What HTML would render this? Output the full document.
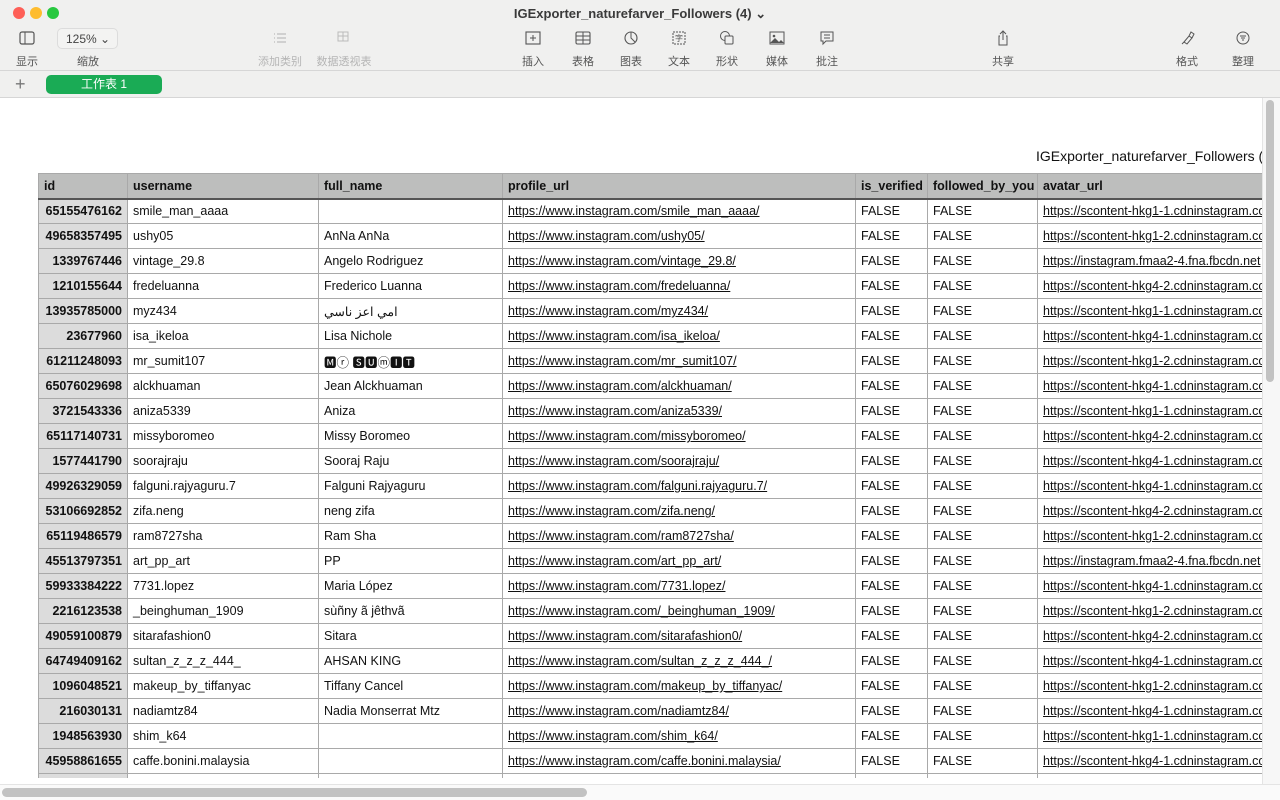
<!DOCTYPE html>
<html><head><meta charset="utf-8">
<style>
*{margin:0;padding:0;box-sizing:border-box}
body{width:1280px;height:800px;overflow:hidden;background:#fff;font-family:"Liberation Sans","Noto Sans CJK SC",sans-serif;position:relative}
#top{position:absolute;left:0;top:0;width:1280px;height:71px;background:#f0f0ef;border-bottom:1px solid #d6d6d6}
#tabs{position:absolute;left:0;top:71px;width:1280px;height:27px;background:#f0f0ef;border-bottom:1px solid #d6d6d6}
.dot{position:absolute;top:7px;width:12px;height:12px;border-radius:50%}
.title{position:absolute;top:6px;left:0;width:1280px;text-align:center;font-size:13px;font-weight:bold;color:#3a3a3a}
.tb{position:absolute;top:53px;font-size:11px;color:#555;width:60px;text-align:center;margin-left:-30px}
.tb.dis{color:#b5b5b5}
.ic{position:absolute;top:30px;margin-left:-9px;width:18px;height:16px}
.zoom{position:absolute;left:57px;top:28px;width:61px;height:21px;border:1px solid #dcdcdc;border-radius:5px;background:#f3f3f2;font-size:12px;color:#444;padding:3px 0 0 8px}
.tab{position:absolute;left:46px;top:75px;width:116px;height:19px;background:#1aab55;border-radius:5px;color:#fff;font-size:12px;text-align:center;line-height:19px}
.plus{position:absolute;left:15px;top:74px;font-size:18px;color:#777;font-weight:300}
#capw{position:absolute;left:1000px;top:146px;width:262px;height:20px;overflow:hidden}
#cap{position:absolute;left:36px;top:2px;font-size:14px;color:#111;white-space:nowrap}
#wrap{position:absolute;left:38px;top:173px;width:1224px;height:605px;overflow:hidden}
table{border-collapse:collapse;table-layout:fixed;width:1300px;font-size:12.5px;color:#111}
td{border:1px solid #a9a9a9;height:25px;padding:0 5px;white-space:nowrap;overflow:hidden}
tr.h td{background:#bdbebd;font-weight:bold;height:25px;border-bottom:2px solid #555}
td.id{background:#dcdcdc;font-weight:bold;text-align:right}
tr.h td.id{background:#bdbebd;text-align:left}
td.u{text-decoration:underline}
#vs{position:absolute;left:1266px;top:100px;width:8px;height:282px;background:#c2c2c2;border-radius:4px}
#vsb{position:absolute;left:1262px;top:98px;width:18px;height:700px;background:#f7f7f7;border-left:1px solid #e4e4e4}
#hs{position:absolute;left:2px;top:788px;width:585px;height:9px;background:#c2c2c2;border-radius:5px}
#hsb{position:absolute;left:0;top:784px;width:1280px;height:16px;background:#fafafa;border-top:1px solid #e4e4e4}
</style></head><body>
<div id="top">
<div class="dot" style="left:13px;background:#fe5f57"></div>
<div class="dot" style="left:30px;background:#febc2e"></div>
<div class="dot" style="left:47px;background:#28c840"></div>
<div class="title">IGExporter_naturefarver_Followers (4) ⌄</div>
<svg class="ic" style="left:27px" viewBox="0 0 18 16"><rect x="2" y="2" width="14" height="12" rx="2" fill="none" stroke="#555" stroke-width="1.2"/><line x1="7" y1="2" x2="7" y2="14" stroke="#555"/></svg>
<div class="tb" style="left:27px">显示</div>
<div class="zoom">125% ⌄</div>
<div class="tb" style="left:88px">缩放</div>
<svg class="ic" style="left:280px" viewBox="0 0 18 16"><g stroke="#bbb" stroke-width="1.2"><line x1="3" y1="4" x2="4" y2="4"/><line x1="6" y1="4" x2="15" y2="4"/><line x1="3" y1="8" x2="4" y2="8"/><line x1="6" y1="8" x2="15" y2="8"/><line x1="3" y1="12" x2="4" y2="12"/><line x1="6" y1="12" x2="15" y2="12"/></g></svg>
<div class="tb dis" style="left:280px">添加类别</div>
<svg class="ic" style="left:344px" viewBox="0 0 18 16"><rect x="3" y="2" width="10" height="9" fill="none" stroke="#bbb"/><line x1="8" y1="2" x2="8" y2="11" stroke="#bbb"/><line x1="3" y1="6" x2="13" y2="6" stroke="#bbb"/></svg>
<div class="tb dis" style="left:344px">数据透视表</div>
<svg class="ic" style="left:533px" viewBox="0 0 18 16"><rect x="2" y="2" width="14" height="12" fill="none" stroke="#555" stroke-width="1.1"/><path d="M9 5v6M6 8h6" stroke="#555"/></svg>
<div class="tb" style="left:533px">插入</div>
<svg class="ic" style="left:583px" viewBox="0 0 18 16"><rect x="2" y="2" width="14" height="12" rx="1.5" fill="none" stroke="#555" stroke-width="1.1"/><path d="M2 6h14M2 10h14M9 2v12" stroke="#555"/></svg>
<div class="tb" style="left:583px">表格</div>
<svg class="ic" style="left:631px" viewBox="0 0 18 16"><circle cx="9" cy="8" r="6" fill="none" stroke="#555" stroke-width="1.1"/><path d="M9 2v6l4 4" fill="none" stroke="#555"/></svg>
<div class="tb" style="left:631px">图表</div>
<svg class="ic" style="left:679px" viewBox="0 0 18 16"><rect x="3" y="2" width="12" height="12" fill="none" stroke="#555" stroke-dasharray="2 1"/><text x="9" y="11" font-size="8" text-anchor="middle" fill="#555">字</text></svg>
<div class="tb" style="left:679px">文本</div>
<svg class="ic" style="left:727px" viewBox="0 0 18 16"><circle cx="7" cy="6" r="4.5" fill="none" stroke="#555"/><rect x="7" y="6" width="8" height="8" rx="1" fill="#f0f0ef" stroke="#555"/></svg>
<div class="tb" style="left:727px">形状</div>
<svg class="ic" style="left:777px" viewBox="0 0 18 16"><rect x="2" y="2" width="14" height="12" fill="none" stroke="#555"/><path d="M2 13l5-5 4 4 2-2 3 3z" fill="#555"/><circle cx="6" cy="6" r="1.3" fill="#555"/></svg>
<div class="tb" style="left:777px">媒体</div>
<svg class="ic" style="left:827px" viewBox="0 0 18 16"><path d="M3 2h12v9H8l-3 3v-3H3z" fill="none" stroke="#555"/><path d="M6 5h6M6 8h6" stroke="#555"/></svg>
<div class="tb" style="left:827px">批注</div>
<svg class="ic" style="left:1003px" viewBox="0 0 18 16"><path d="M6 6H5v9h8V6h-1M9 1v9M6 4l3-3 3 3" fill="none" stroke="#555"/></svg>
<div class="tb" style="left:1003px">共享</div>
<svg class="ic" style="left:1187px" viewBox="0 0 18 16"><path d="M4 14l3-3M6 12l5-6 3 2-5 6zM11 6l2-4 3 2-2 4" fill="none" stroke="#555"/></svg>
<div class="tb" style="left:1187px">格式</div>
<svg class="ic" style="left:1243px" viewBox="0 0 18 16"><circle cx="9" cy="8" r="6" fill="none" stroke="#555"/><path d="M6 6h6M7 8h4M8 10h2" stroke="#555"/></svg>
<div class="tb" style="left:1243px">整理</div>
</div>
<div id="tabs"></div>
<div class="plus">+</div>
<div class="tab">工作表 1</div>
<div id="capw"><div id="cap">IGExporter_naturefarver_Followers (4)</div></div>
<div id="wrap"><table>
<colgroup><col style="width:89px"><col style="width:191px"><col style="width:184px"><col style="width:353px"><col style="width:72px"><col style="width:110px"><col style="width:301px"></colgroup>
<tr class="h"><td class="id">id</td><td>username</td><td>full_name</td><td>profile_url</td><td>is_verified</td><td>followed_by_you</td><td>avatar_url</td></tr>
<tr><td class="id">65155476162</td><td>smile_man_aaaa</td><td></td><td class="u">https://www.instagram.com/smile_man_aaaa/</td><td>FALSE</td><td>FALSE</td><td class="u">https://scontent-hkg1-1.cdninstagram.com</td></tr>
<tr><td class="id">49658357495</td><td>ushy05</td><td>AnNa AnNa</td><td class="u">https://www.instagram.com/ushy05/</td><td>FALSE</td><td>FALSE</td><td class="u">https://scontent-hkg1-2.cdninstagram.com</td></tr>
<tr><td class="id">1339767446</td><td>vintage_29.8</td><td>Angelo Rodriguez</td><td class="u">https://www.instagram.com/vintage_29.8/</td><td>FALSE</td><td>FALSE</td><td class="u">https://instagram.fmaa2-4.fna.fbcdn.net</td></tr>
<tr><td class="id">1210155644</td><td>fredeluanna</td><td>Frederico Luanna</td><td class="u">https://www.instagram.com/fredeluanna/</td><td>FALSE</td><td>FALSE</td><td class="u">https://scontent-hkg4-2.cdninstagram.com</td></tr>
<tr><td class="id">13935785000</td><td>myz434</td><td>امي اعز ناسي</td><td class="u">https://www.instagram.com/myz434/</td><td>FALSE</td><td>FALSE</td><td class="u">https://scontent-hkg1-1.cdninstagram.com</td></tr>
<tr><td class="id">23677960</td><td>isa_ikeloa</td><td>Lisa Nichole</td><td class="u">https://www.instagram.com/isa_ikeloa/</td><td>FALSE</td><td>FALSE</td><td class="u">https://scontent-hkg4-1.cdninstagram.com</td></tr>
<tr><td class="id">61211248093</td><td>mr_sumit107</td><td>🅼ⓡ 🆂🆄ⓜ🅸🆃</td><td class="u">https://www.instagram.com/mr_sumit107/</td><td>FALSE</td><td>FALSE</td><td class="u">https://scontent-hkg1-2.cdninstagram.com</td></tr>
<tr><td class="id">65076029698</td><td>alckhuaman</td><td>Jean Alckhuaman</td><td class="u">https://www.instagram.com/alckhuaman/</td><td>FALSE</td><td>FALSE</td><td class="u">https://scontent-hkg4-1.cdninstagram.com</td></tr>
<tr><td class="id">3721543336</td><td>aniza5339</td><td>Aniza</td><td class="u">https://www.instagram.com/aniza5339/</td><td>FALSE</td><td>FALSE</td><td class="u">https://scontent-hkg1-1.cdninstagram.com</td></tr>
<tr><td class="id">65117140731</td><td>missyboromeo</td><td>Missy Boromeo</td><td class="u">https://www.instagram.com/missyboromeo/</td><td>FALSE</td><td>FALSE</td><td class="u">https://scontent-hkg4-2.cdninstagram.com</td></tr>
<tr><td class="id">1577441790</td><td>soorajraju</td><td>Sooraj Raju</td><td class="u">https://www.instagram.com/soorajraju/</td><td>FALSE</td><td>FALSE</td><td class="u">https://scontent-hkg4-1.cdninstagram.com</td></tr>
<tr><td class="id">49926329059</td><td>falguni.rajyaguru.7</td><td>Falguni Rajyaguru</td><td class="u">https://www.instagram.com/falguni.rajyaguru.7/</td><td>FALSE</td><td>FALSE</td><td class="u">https://scontent-hkg4-1.cdninstagram.com</td></tr>
<tr><td class="id">53106692852</td><td>zifa.neng</td><td>neng zifa</td><td class="u">https://www.instagram.com/zifa.neng/</td><td>FALSE</td><td>FALSE</td><td class="u">https://scontent-hkg4-2.cdninstagram.com</td></tr>
<tr><td class="id">65119486579</td><td>ram8727sha</td><td>Ram Sha</td><td class="u">https://www.instagram.com/ram8727sha/</td><td>FALSE</td><td>FALSE</td><td class="u">https://scontent-hkg1-2.cdninstagram.com</td></tr>
<tr><td class="id">45513797351</td><td>art_pp_art</td><td>PP</td><td class="u">https://www.instagram.com/art_pp_art/</td><td>FALSE</td><td>FALSE</td><td class="u">https://instagram.fmaa2-4.fna.fbcdn.net</td></tr>
<tr><td class="id">59933384222</td><td>7731.lopez</td><td>Maria López</td><td class="u">https://www.instagram.com/7731.lopez/</td><td>FALSE</td><td>FALSE</td><td class="u">https://scontent-hkg4-1.cdninstagram.com</td></tr>
<tr><td class="id">2216123538</td><td>_beinghuman_1909</td><td>sùñny ã jêthvã</td><td class="u">https://www.instagram.com/_beinghuman_1909/</td><td>FALSE</td><td>FALSE</td><td class="u">https://scontent-hkg1-2.cdninstagram.com</td></tr>
<tr><td class="id">49059100879</td><td>sitarafashion0</td><td>Sitara</td><td class="u">https://www.instagram.com/sitarafashion0/</td><td>FALSE</td><td>FALSE</td><td class="u">https://scontent-hkg4-2.cdninstagram.com</td></tr>
<tr><td class="id">64749409162</td><td>sultan_z_z_z_444_</td><td>AHSAN KING</td><td class="u">https://www.instagram.com/sultan_z_z_z_444_/</td><td>FALSE</td><td>FALSE</td><td class="u">https://scontent-hkg4-1.cdninstagram.com</td></tr>
<tr><td class="id">1096048521</td><td>makeup_by_tiffanyac</td><td>Tiffany Cancel</td><td class="u">https://www.instagram.com/makeup_by_tiffanyac/</td><td>FALSE</td><td>FALSE</td><td class="u">https://scontent-hkg1-2.cdninstagram.com</td></tr>
<tr><td class="id">216030131</td><td>nadiamtz84</td><td>Nadia Monserrat Mtz</td><td class="u">https://www.instagram.com/nadiamtz84/</td><td>FALSE</td><td>FALSE</td><td class="u">https://scontent-hkg4-1.cdninstagram.com</td></tr>
<tr><td class="id">1948563930</td><td>shim_k64</td><td></td><td class="u">https://www.instagram.com/shim_k64/</td><td>FALSE</td><td>FALSE</td><td class="u">https://scontent-hkg1-1.cdninstagram.com</td></tr>
<tr><td class="id">45958861655</td><td>caffe.bonini.malaysia</td><td></td><td class="u">https://www.instagram.com/caffe.bonini.malaysia/</td><td>FALSE</td><td>FALSE</td><td class="u">https://scontent-hkg4-1.cdninstagram.com</td></tr>
<tr><td class="id">&nbsp;</td><td></td><td></td><td></td><td></td><td></td><td></td></tr>
</table></div>
<div id="vsb"></div><div id="vs"></div>
<div id="hsb"></div><div id="hs"></div>
</body></html>
